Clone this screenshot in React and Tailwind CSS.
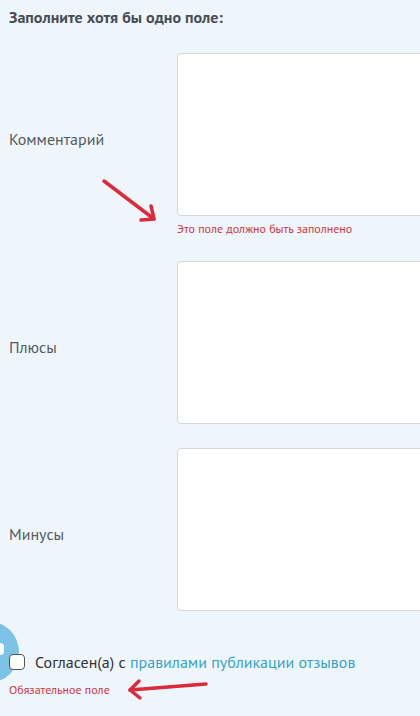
import React from "react";

const font = { fontFamily: '"PT Sans", "Noto Sans", "Open Sans", sans-serif' };

function Row({ label, error }) {
  return (
    <div className="flex flex-col">
      <div className="flex items-center">
        <div className="mt-[9px] w-[168px] shrink-0 text-[16px] leading-[22px] text-[#555a5f]">{label}</div>
        <div className="h-[163px] w-[260px] shrink-0 rounded-[4px] border border-[#d3d6da] bg-white" />
      </div>
      {error ? (
        <div className="ml-[168px] mt-[5px] text-[12px] leading-[16px] text-[#d0373d]">{error}</div>
      ) : null}
    </div>
  );
}

export default function App() {
  return (
    <div className="relative h-[716px] w-[420px] overflow-hidden bg-[#eef6fc]" style={font}>
      <div className="absolute left-[-43px] top-[621px] h-[62px] w-[62px] rounded-full bg-[#7cc2e6]" />
      <div className="absolute left-[-4px] top-[643px] h-[12px] w-[8px] rounded-full bg-white" />
      <div className="relative px-[9px] pt-[7px]">
        <div className="text-[16px] font-bold leading-[20px] text-[#494e54]">Заполните хотя бы одно поле:</div>
        <div className="mt-[26px] flex flex-col">
          <Row label="Комментарий" error="Это поле должно быть заполнено" />
          <div className="mt-[24px]">
            <Row label="Плюсы" />
          </div>
          <div className="mt-[24px]">
            <Row label="Минусы" />
          </div>
        </div>
        <div className="mt-[39px] flex h-[24px] items-center gap-[10px]">
          <span className="block h-[16px] w-[16px] shrink-0 rounded-[4px] border border-[#555] bg-white" />
          <span className="text-[16px] leading-[24px] text-[#333]">
            Согласен(а) с <span className="text-[#3aa3c8]">правилами публикации отзывов</span>
          </span>
        </div>
        <div className="mt-[8px] text-[12px] leading-[16px] text-[#d0373d]">Обязательное поле</div>
      </div>
      <svg className="absolute left-0 top-0" width="420" height="716" viewBox="0 0 420 716" fill="none">
        <g stroke="#dc2a3b" strokeWidth="3.5" strokeLinecap="round" strokeLinejoin="round">
          <path d="M104 181 L154 219" />
          <path d="M141 220 L154 219 L151 206" />
          <path d="M206 684 L130 690" />
          <path d="M139 681 L130 690 L140 698" />
        </g>
      </svg>
    </div>
  );
}
